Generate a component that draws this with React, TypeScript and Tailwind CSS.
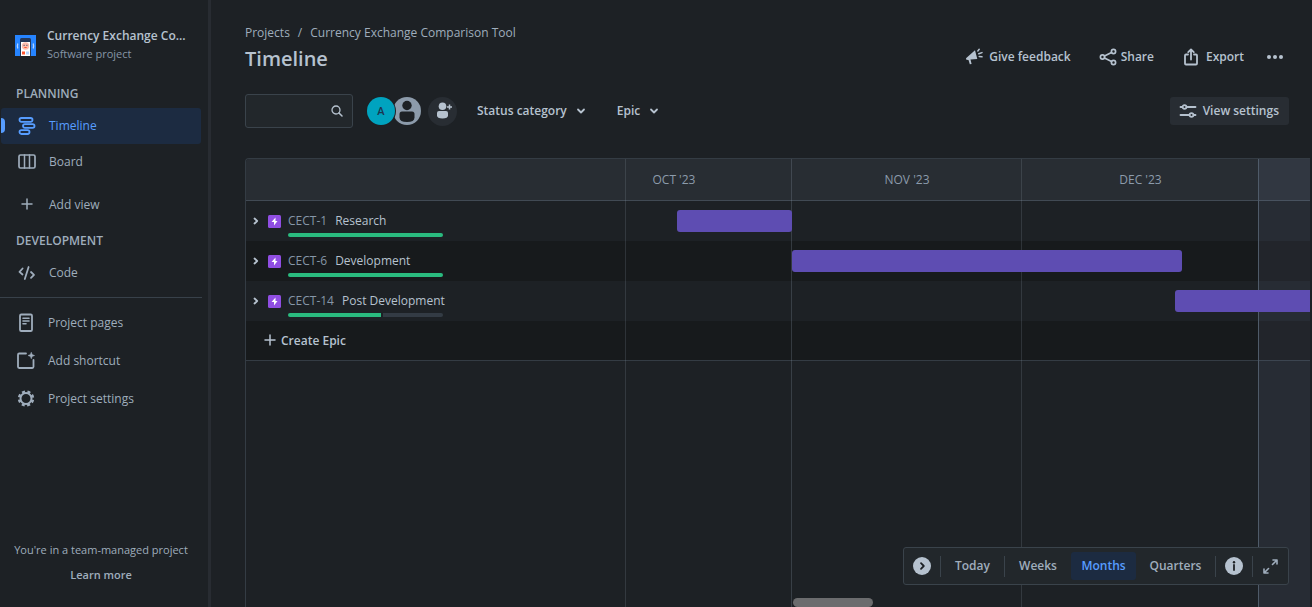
import React from "react";

const stroke = {
  fill: "none",
  stroke: "currentColor",
  strokeWidth: 2,
  strokeLinecap: "round" as const,
  strokeLinejoin: "round" as const,
};

function Svg({ className = "size-5", box = "0 0 24 24", children }: { className?: string; box?: string; children: React.ReactNode }) {
  return (
    <svg viewBox={box} className={`shrink-0 ${className}`} aria-hidden="true">
      {children}
    </svg>
  );
}

const TimelineIcon = () => (
  <Svg className="h-5 w-[18px]" box="0 0 18 20">
    <g {...stroke} strokeWidth={1.8}>
      <rect x="1.500" y="2" width="13" height="3.800" rx="1.900" />
      <rect x="5" y="8.100" width="11.500" height="3.800" rx="1.900" />
      <rect x="1.500" y="14.200" width="10" height="3.800" rx="1.900" />
    </g>
  </Svg>
);
const BoardIcon = () => (
  <Svg className="h-5 w-[18px]" box="0 0 18 20">
    <rect x="1" y="3" width="16" height="13" rx="1.500" {...stroke} strokeWidth={1.7} />
    <path d="M6.500 3v13M11.500 3v13" {...stroke} strokeWidth={1.5} />
  </Svg>
);
const PlusIcon = () => (
  <Svg className="h-5 w-[18px]" box="0 0 18 20">
    <path d="M9 4v10M4 9h10" {...stroke} strokeWidth={1.5} />
  </Svg>
);
const CodeIcon = () => (
  <Svg className="h-5 w-[18px]" box="0 0 18 20">
    <path d="M4.600 5.500 1.500 8.800l3 2.700M13 9l3 2.800-3 3.100M10.600 4 6.800 16" {...stroke} strokeWidth={1.8} />
  </Svg>
);
const PageIcon = () => (
  <Svg className="h-5 w-[18px]" box="0 0 18 20">
    <rect x="3" y="1.500" width="12" height="16.500" rx="1.300" {...stroke} strokeWidth={1.8} />
    <path d="M6 5.200h6M6 8h6M6 10.800h3" {...stroke} strokeWidth={1.6} />
  </Svg>
);
const ShortcutIcon = () => (
  <Svg className="h-5 w-[18px]" box="0 0 18 20">
    <path d="M9 2.500H2.200Q1 2.500 1 3.700V15.800Q1 17 2.200 17H15.300Q16.500 17 16.500 15.800V9" {...stroke} strokeWidth={1.8} />
    <path d="M14.300 1.200 15.200 3.600 17.600 4.500 15.200 5.400 14.300 7.800 13.400 5.400 11 4.500 13.400 3.600Z" fill="currentColor" stroke="currentColor" strokeWidth="0.500" />
  </Svg>
);
const GearIcon = () => (
  <Svg className="h-5 w-[18px]" box="0 0 18 20">
    <circle cx="9" cy="9.500" r="5.500" fill="none" stroke="currentColor" strokeWidth="2" />
    <circle cx="9" cy="9.500" r="7" fill="none" stroke="currentColor" strokeWidth="2.400" strokeDasharray="3 2.498" strokeDashoffset="-1.250" />
  </Svg>
);
const MegaphoneIcon = () => (
  <Svg className="size-[18px]" box="0 0 18 18">
    <path d="M1 10.200 10 2.200 12.300 11 5.500 11.600 6.600 16 4.800 16.300 3.500 11.900 1.300 11.700Z" fill="currentColor" />
    <path d="M12.800 3 14.200 1.300M13.800 5.800 17 4.600M14.200 8.400 17 8.800" {...stroke} strokeWidth={1.5} />
  </Svg>
);
const ShareIcon = () => (
  <Svg className="size-[18px]" box="0 0 18 18">
    <g {...stroke} strokeWidth={1.7}>
      <circle cx="3.500" cy="9" r="2.100" />
      <circle cx="14.500" cy="3.500" r="2.100" />
      <circle cx="14.500" cy="14.500" r="2.100" />
      <path d="M5.500 8 12.500 4.500M5.500 10l7 3.500" />
    </g>
  </Svg>
);
const ExportIcon = () => (
  <Svg className="size-[18px]" box="0 0 18 18">
    <path d="M6 6.500H4Q3 6.500 3 7.500V15.500Q3 16.500 4 16.500H14Q15 16.500 15 15.500V7.500Q15 6.500 14 6.500H12M9 11.500V1.500M6.200 4.200 9 1.500 11.800 4.200" {...stroke} strokeWidth={1.8} />
  </Svg>
);
const SlidersIcon = () => (
  <Svg className="size-[18px]" box="0 0 18 18">
    <g {...stroke} strokeWidth={1.8}>
      <path d="M1.500 5H3M8 5h8.500M1.500 13H10M15 13h1.500" />
      <circle cx="5.500" cy="5" r="1.900" />
      <circle cx="12.500" cy="13" r="1.900" />
    </g>
  </Svg>
);
const ChevronDown = () => (
  <Svg className="size-2.5" box="0 0 10 10">
    <path d="M2 3.500 5 6.500 8 3.500" {...stroke} strokeWidth={1.8} />
  </Svg>
);
const ChevronRight = () => (
  <Svg className="size-2.5" box="0 0 10 10">
    <path d="M3.500 2.500 6.200 5 3.500 7.500" {...stroke} strokeWidth={1.8} />
  </Svg>
);

function ProjectLogo() {
  return (
    <Svg className="size-[21px]" box="0 0 21 21">
      <rect width="21" height="21" fill="#2684ff" />
      <path d="M2.800 8.500Q2 11 2.800 13.500M18.200 8.500Q19 11 18.200 13.500" stroke="#b3d4ff" strokeWidth="1.300" fill="none" />
      <path d="M5 21V4.500Q5 3 6.500 3H14.500Q16 3 16 4.500V21Z" fill="#253858" />
      <path d="M6 21V7H15V21Z" fill="#fff" />
      <circle cx="10.500" cy="11" r="3.700" fill="#ffbdad" />
      <path d="M8.600 10.300h1M11.400 10.300h1" stroke="#253858" />
      <path d="M9.300 12.500h2.400" stroke="#ff5630" />
      <rect x="7" y="16.500" width="3" height="3" fill="#ff5630" />
      <rect x="11" y="16.500" width="3" height="3" fill="#b3d4ff" />
    </Svg>
  );
}

function NavItem({ icon, label, active = false, inset = "pl-[17px]" }: { icon: React.ReactNode; label: string; active?: boolean; inset?: string }) {
  return (
    <a
      href="#"
      className={`relative mr-[7px] ml-px flex h-9 items-center gap-[13px] rounded-[3px] ${inset} ${active ? "bg-[#1c2b41] text-[#579dff]" : "text-[#9fadbc]"}`}
    >
      {active && <span className="absolute top-[10px] left-0 h-[15px] w-1 rounded-r-sm bg-[#579dff]" />}
      {icon}
      {label}
    </a>
  );
}

function Heading({ children }: { children: React.ReactNode }) {
  return <h2 className="pl-4 leading-4 font-semibold text-[#9fadbc]">{children}</h2>;
}

function Sidebar() {
  return (
    <aside className="flex w-[211px] shrink-0 flex-col border-r-[3px] border-[#282c32] text-[12px] leading-5">
      <div className="flex items-center gap-[11px] pt-[27px] pr-4 pl-[15px]">
        <ProjectLogo />
        <div className="min-w-0">
          <div className="leading-[18px] font-semibold whitespace-nowrap text-[#b6c2cf]">Currency Exchange Co...</div>
          <div className="text-[11px] leading-[18px] text-[#8696a7]">Software project</div>
        </div>
      </div>
      <nav className="flex flex-col pt-[23px]" aria-label="Project">
        <Heading>PLANNING</Heading>
        <div className="pt-1.5 pb-[7px]">
          <NavItem icon={<TimelineIcon />} label="Timeline" active />
          <NavItem icon={<BoardIcon />} label="Board" />
        </div>
        <NavItem icon={<PlusIcon />} label="Add view" />
        <div className="pt-2.5">
          <Heading>DEVELOPMENT</Heading>
        </div>
        <div className="py-1.5">
          <NavItem icon={<CodeIcon />} label="Code" />
        </div>
        <div className="mr-1.5 flex flex-col gap-0.5 border-t border-[#38414a] pt-[7px]">
          <NavItem inset="pl-4" icon={<PageIcon />} label="Project pages" />
          <NavItem inset="pl-4" icon={<ShortcutIcon />} label="Add shortcut" />
          <NavItem inset="pl-4" icon={<GearIcon />} label="Project settings" />
        </div>
      </nav>
      <div className="mt-auto flex flex-col items-center gap-[5px] pr-1.5 pb-[22px] text-[11px] text-[#9fadbc]">
        <p>You're in a team-managed project</p>
        <a href="#" className="font-semibold">
          Learn more
        </a>
      </div>
    </aside>
  );
}

function TopBar() {
  return (
    <header className="flex items-start justify-between pr-7">
      <div>
        <nav className="flex gap-2 text-[12px] leading-5 text-[#9fadbc]" aria-label="Breadcrumb">
          <a href="#">Projects</a>
          <span>/</span>
          <a href="#">Currency Exchange Comparison Tool</a>
        </nav>
        <h1 className="pt-0.5 text-[20px] leading-7 font-semibold text-[#b6c2cf]">Timeline</h1>
      </div>
      <div className="flex items-center gap-7 pt-6 text-[12px] leading-5 font-semibold text-[#b6c2cf]">
        <button className="flex items-center gap-1.5">
          <MegaphoneIcon />
          Give feedback
        </button>
        <button className="flex items-center gap-1">
          <ShareIcon />
          Share
        </button>
        <button className="flex items-center gap-1.5">
          <ExportIcon />
          Export
        </button>
        <button aria-label="More actions" className="-ml-1.5">
          <Svg className="size-[18px]" box="0 0 18 18">
            <g fill="currentColor">
              <circle cx="3" cy="9" r="2" />
              <circle cx="9" cy="9" r="2" />
              <circle cx="15" cy="9" r="2" />
            </g>
          </Svg>
        </button>
      </div>
    </header>
  );
}

function FilterBar() {
  return (
    <div className="flex items-center pt-[21px] pr-[23px] text-[12px] leading-5 font-semibold text-[#b6c2cf]">
      <label className="flex h-[34px] w-[108px] items-center rounded-[3px] border border-[#3a434b] bg-[#22272b] pr-[9px]">
        <input type="text" aria-label="Search timeline" className="w-full min-w-0 bg-transparent px-2 outline-none" />
        <Svg className="size-3" box="0 0 12 12">
          <circle cx="5" cy="5" r="4" {...stroke} strokeWidth={1.3} />
          <path d="m8 8 3 3" {...stroke} strokeWidth={1.5} />
        </Svg>
      </label>
      <div className="flex items-center pl-3.5">
        <button className="z-10 grid size-7 place-items-center rounded-full bg-[#00a3bf] text-[11px] text-[#1d3550] ring-1 ring-[#1d2125]">A</button>
        <button aria-label="Unassigned" className="-ml-0.5 size-7">
          <Svg className="size-7" box="0 0 28 28">
            <circle cx="14" cy="14" r="14" fill="#8c9bab" />
            <circle cx="14" cy="8.500" r="4.700" fill="#1d2125" />
            <path d="M6.500 17Q6.500 14.500 9 14.500H19Q21.500 14.500 21.500 17V20.500Q21.500 25 14 25T6.500 20.500Z" fill="#1d2125" />
          </Svg>
        </button>
        <button aria-label="Add people" className="ml-[7px] grid size-[29px] place-items-center rounded-full bg-[#282d33]">
          <Svg className="size-[18px]" box="0 0 18 18">
            <g fill="currentColor">
              <circle cx="8.500" cy="4.300" r="3.800" />
              <path d="M3 11Q3 9 5 9H12Q14 9 14 11V13.500Q14 16.500 8.500 16.500T3 13.500Z" />
            </g>
            <path d="M15.500 2.500v5M13 5h5" stroke="currentColor" strokeWidth="1.500" />
          </Svg>
        </button>
      </div>
      <button className="ml-5 flex items-center gap-[9px]">
        Status category
        <ChevronDown />
      </button>
      <button className="ml-[31px] flex items-center gap-[9px]">
        Epic
        <ChevronDown />
      </button>
      <button className="ml-auto flex h-7 items-center gap-1.5 rounded-[3px] bg-[#282d33] px-2.5 pl-[9px]">
        <SlidersIcon />
        View settings
      </button>
    </div>
  );
}

const epics = [
  { id: "CECT-1", name: "Research", done: 100, span: "ml-[51px] w-[115px] rounded-[3px]" },
  { id: "CECT-6", name: "Development", done: 100, span: "ml-[166px] w-[390px] rounded-[3px]" },
  { id: "CECT-14", name: "Post Development", done: 60, span: "ml-[549px] flex-1 rounded-l-[3px]" },
];

const months = ["OCT '23", "NOV '23", "DEC '23"];

function Chart() {
  return (
    <section className="relative mt-[30px] mr-0.5 flex flex-1 flex-col overflow-hidden rounded-tl-sm border-t border-l border-[#343c44] text-[12px]">
      <div className="grid h-[42px] shrink-0 grid-cols-[380px_166px_230px_237px_1fr] items-center border-b border-[#414a54] bg-[#282d33] text-center text-[#8c9bab]">
        <span />
        {months.map((m, i) => (
          <span key={m} className={i === 0 ? "pr-[70px]" : ""}>
            {m}
          </span>
        ))}
        <span />
      </div>

      {epics.map((epic, i) => (
        <div key={epic.id} className={`flex h-10 shrink-0 items-center ${i % 2 ? "bg-[#171a1c]" : "bg-[#1d2125]"}`}>
          <div className="flex w-[380px] shrink-0 items-center pl-[5px] text-[#b6c2cf]">
            <button aria-label={`Expand ${epic.name}`}>
              <ChevronRight />
            </button>
            <Svg className="ml-[7px] size-[13px]" box="0 0 13 13">
              <rect width="13" height="13" rx="1.500" fill="#904ee2" />
              <path d="M7.500 2.500 3.500 7H6V10.500L9.500 6H7.500Z" fill="#fff" />
            </Svg>
            <div className="flex flex-col gap-0.5 pt-1.5 pl-[7px]">
              <a href="#" className="flex gap-2 leading-5 whitespace-nowrap">
                <span className="text-[#8696a7]">{epic.id}</span>
                {epic.name}
              </a>
              <div className="flex h-1 w-[155px] gap-0.5 overflow-hidden rounded-full">
                <div className="bg-[#2abb7f]" style={{ width: `${epic.done}%` }} />
                {epic.done < 100 && <div className="flex-1 bg-[#333b44]" />}
              </div>
            </div>
          </div>
          <div className="z-10 flex min-w-0 flex-1">
            <div className={`h-[22px] bg-[#5e4db2] ${epic.span}`} />
          </div>
        </div>
      ))}

      <div className="flex h-10 shrink-0 items-center border-b border-[#343c44] bg-[#171a1c] pl-[15px]">
        <button className="flex items-center gap-0.5 font-semibold text-[#b6c2cf]">
          <PlusIcon />
          Create Epic
        </button>
      </div>

      <div className="pointer-events-none absolute inset-0 grid grid-cols-[379px_166px_230px_237px_1fr]">
        <span />
        <span className="border-l border-[#8c9bab]/20" />
        <span className="border-l border-[#8c9bab]/25" />
        <span className="border-l border-[#8c9bab]/20" />
        <span className="border-l border-[#4f5b69] bg-[#a2afe1]/8" />
      </div>

      <div className="absolute bottom-0 left-[547px] z-10 h-[9px] w-20 rounded-full bg-[#6b6c6e]" />
    </section>
  );
}

function ZoomBar() {
  const divider = <span className="h-[21px] w-px bg-[#3a434b]" />;
  return (
    <div className="absolute right-[23px] bottom-[22px] z-20 flex h-[38px] items-center rounded-[3px] border border-[#3a434b] bg-[#22272b] px-[9px] text-[12px] leading-5 font-semibold text-[#9fadbc]">
      <button aria-label="Scroll right" className="mr-[9px]">
        <Svg className="size-[18px]" box="0 0 18 18">
          <circle cx="9" cy="9" r="9" fill="#b6c2cf" />
          <path d="M8 6.200 10.800 9 8 11.800" {...stroke} stroke="#1d2125" strokeWidth={1.8} />
        </Svg>
      </button>
      {divider}
      <button className="w-[63px] text-center">Today</button>
      {divider}
      <button className="w-[66px] text-center">Weeks</button>
      <button className="h-7 w-[65px] rounded-[3px] bg-[#1c2b41] text-center text-[#579dff]">Months</button>
      <button className="w-[79px] text-center">Quarters</button>
      {divider}
      <button aria-label="Legend" className="mx-[9px]">
        <Svg className="size-[18px]" box="0 0 18 18">
          <circle cx="9" cy="9" r="9" fill="#b6c2cf" />
          <circle cx="9" cy="5.200" r="1.200" fill="#1d2125" />
          <path d="M9 8v5" {...stroke} stroke="#1d2125" strokeWidth={1.8} />
        </Svg>
      </button>
      {divider}
      <button aria-label="Full screen" className="ml-[9px]">
        <Svg className="size-[17px]" box="0 0 17 17">
          <g {...stroke} strokeWidth={1.6}>
            <path d="M11 2H15V6M15 2 10.500 6.500M6 15H2V11M2 15 6.500 10.500" />
          </g>
        </Svg>
      </button>
    </div>
  );
}

export default function App() {
  return (
    <div className="flex min-h-screen bg-[#1d2125] font-['Open_Sans','Noto_Sans',sans-serif]">
      <Sidebar />
      <main className="relative flex min-w-0 flex-1 flex-col pt-[23px] pl-[34px]">
        <TopBar />
        <FilterBar />
        <Chart />
        <ZoomBar />
      </main>
    </div>
  );
}
